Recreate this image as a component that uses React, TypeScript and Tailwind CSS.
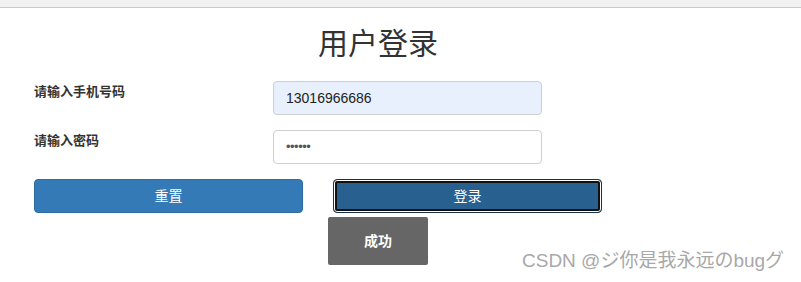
import React from "react";

export default function App() {
  const font = { fontFamily: '"Liberation Sans", Arial, "Noto Sans CJK SC", sans-serif' };
  return (
    <div className="relative w-[801px] h-[282px] bg-white overflow-hidden" style={font}>
      <div className="h-[8px] bg-[#f1f1f1] border-b border-[#c9c9c9]" />
      <div className="w-[756px]">
        <h1 className="mt-[19px] text-center text-[30px] leading-[33px] text-[#333] font-normal">用户登录</h1>
        <div className="pl-[34px] mt-[21px] flex flex-col gap-[15px]">
          <div className="flex items-start">
            <label className="w-[239px] pt-[1px] text-[13px] leading-[20px] font-bold text-[#333]">请输入手机号码</label>
            <div className="w-[269px] h-[34px] rounded-[4px] border border-[#cfcfcf] bg-[#e8f0fe] px-[12px] flex items-center text-[14px] text-[#222]">13016966686</div>
          </div>
          <div className="flex items-start">
            <label className="w-[239px] pt-[1px] text-[13px] leading-[20px] font-bold text-[#333]">请输入密码</label>
            <div className="w-[269px] h-[34px] rounded-[4px] border border-[#cfcfcf] bg-white px-[12px] flex items-center text-[13px] tracking-[-0.5px] text-[#555]">••••••</div>
          </div>
          <div className="flex gap-[30px]">
            <button className="w-[269px] h-[34px] rounded-[4px] border border-[#2e6da4] bg-[#337ab7] text-white text-[14px]">重置</button>
            <button className="w-[269px] h-[34px] rounded-[4px] border border-[#17314a] bg-[#286090] text-white text-[14px] shadow-[inset_0_0_0_1px_#fff,inset_0_0_0_3px_#111]">登录</button>
          </div>
        </div>
        <div className="mt-[4px] ml-[328px] w-[100px] h-[48px] rounded-[2px] bg-[#666] text-white text-[14px] font-bold flex items-center justify-center">成功</div>
      </div>
      <div className="absolute left-[522px] top-[249px] text-[19px] leading-[24px] text-[#a8a8a8] whitespace-nowrap [text-shadow:0_0_1px_#fff]" style={{ fontFamily: '"Liberation Sans", "Noto Sans CJK JP", sans-serif' }}>
        CSDN @ジ你是我永远のbugグ
      </div>
    </div>
  );
}
